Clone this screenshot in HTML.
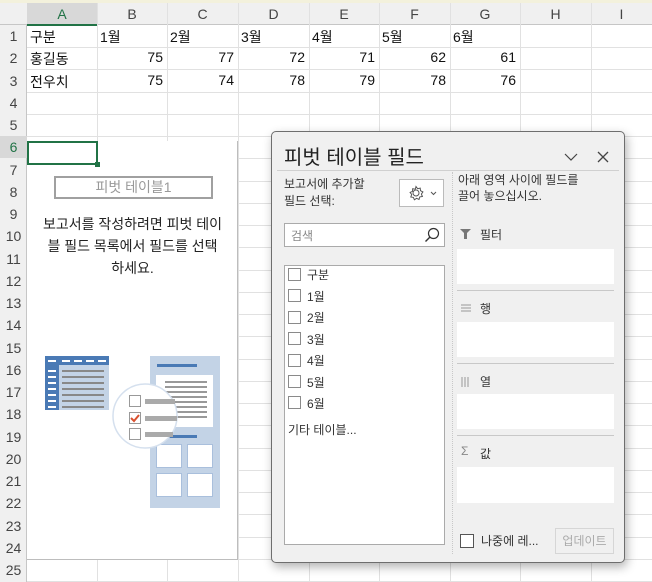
<!DOCTYPE html>
<html><head><meta charset="utf-8">
<style>
*{box-sizing:border-box;margin:0;padding:0}
body{width:652px;height:582px;overflow:hidden;background:#fff;position:relative;font-family:"Liberation Sans","Noto Sans CJK KR",sans-serif;font-size:14px;color:#222}
.a{position:absolute}
.vl{position:absolute;width:1px;background:#e1e1e1}
.hl{position:absolute;height:1px;background:#e1e1e1}
.ch{position:absolute;top:3px;height:22px;text-align:center;line-height:22px;color:#444;font-size:14px}
.rh{position:absolute;left:0;width:27px;text-align:center;color:#444;font-size:14px}
.c{position:absolute;font-size:14px;color:#111}
.r{text-align:right}
.pane{position:absolute;left:271px;top:131px;width:354px;height:432px;background:#f0f0f0;border:1px solid #6e6e6e;border-radius:5px;box-shadow:2px 4px 10px rgba(0,0,0,.3)}
.p{position:absolute;font-size:12px;color:#333}
.box{position:absolute;background:#fff}
.cb{position:absolute;width:13px;height:13px;border:1px solid #8a8a8a;background:#fff}
</style></head><body>
<div class="a" style="left:0;top:0;width:652px;height:3px;background:#f3f1dc"></div>
<div class="a" style="left:0;top:3px;width:652px;height:22px;background:#f0f0f0;border-bottom:1px solid #c6c6c6"></div>
<div class="a" style="left:0;top:25px;width:27px;height:557px;background:#f0f0f0;border-right:1px solid #c6c6c6"></div>
<div class="a" style="left:27px;top:3px;width:70px;height:23px;background:#d8d8d8;border-bottom:2px solid #217346"></div>
<div id="g"></div>
<!-- pivot placeholder -->
<div class="a" style="left:27px;top:141px;width:211px;height:419px;background:#fff;border-right:1px solid #bdbdbd;border-bottom:1px solid #bdbdbd"></div>
<div class="a" style="left:27px;top:141px;width:71px;height:24px;border:2px solid #217346"></div>
<div class="a" style="left:95px;top:162px;width:5px;height:5px;background:#217346"></div>
<div class="a" style="left:54px;top:176px;width:159px;height:23px;border:2px solid #a0a0a0;text-align:center;line-height:19px;color:#999;font-size:14px">피벗 테이블1</div>
<div class="a" style="left:29px;top:213px;width:207px;text-align:center;font-size:14px;line-height:22px;color:#222">보고서를 작성하려면 피벗 테이<br>블 필드 목록에서 필드를 선택<br>하세요.</div>
<svg class="a" style="left:30px;top:340px" width="200" height="180" viewBox="0 0 200 180">
<rect x="15" y="16" width="64" height="54" fill="#c3d3e6"/>
<rect x="15" y="16" width="64" height="9" fill="#4a7ab5"/>
<rect x="15" y="16" width="14" height="54" fill="#4a7ab5"/>
<g fill="#fff"><rect x="18" y="20" width="8" height="2"/><rect x="32" y="20" width="8" height="2"/><rect x="44" y="20" width="8" height="2"/><rect x="56" y="20" width="8" height="2"/><rect x="68" y="20" width="8" height="2"/>
<rect x="18" y="30" width="8" height="2"/><rect x="18" y="36" width="8" height="2"/><rect x="18" y="42" width="8" height="2"/><rect x="18" y="48" width="8" height="2"/><rect x="18" y="54" width="8" height="2"/><rect x="18" y="60" width="8" height="2"/><rect x="18" y="66" width="8" height="2"/></g>
<g fill="#888"><rect x="32" y="30" width="42" height="2"/><rect x="32" y="36" width="42" height="2"/><rect x="32" y="42" width="42" height="2"/><rect x="32" y="48" width="42" height="2"/><rect x="32" y="54" width="42" height="2"/><rect x="32" y="60" width="42" height="2"/><rect x="32" y="66" width="42" height="2"/></g>
<rect x="120" y="16" width="70" height="152" fill="#c3d3e6"/>
<rect x="127" y="24" width="40" height="3" fill="#4a7ab5"/>
<rect x="126" y="35" width="57" height="52" fill="#fff"/>
<g fill="#999"><rect x="135" y="41" width="42" height="2"/><rect x="135" y="46" width="42" height="2"/><rect x="135" y="51" width="42" height="2"/><rect x="135" y="56" width="42" height="2"/><rect x="135" y="61" width="42" height="2"/><rect x="135" y="66" width="42" height="2"/><rect x="135" y="71" width="42" height="2"/><rect x="135" y="76" width="42" height="2"/></g>
<rect x="127" y="95" width="40" height="3" fill="#4a7ab5"/>
<g fill="#fff" stroke="#a9bfdc"><rect x="126.5" y="104.5" width="25" height="23"/><rect x="157.5" y="104.5" width="25" height="23"/><rect x="126.5" y="133.5" width="25" height="23"/><rect x="157.5" y="133.5" width="25" height="23"/></g>
<circle cx="115" cy="76" r="32" fill="#fff" stroke="#d5e0ee" stroke-width="1.5"/>
<g fill="#fff" stroke="#999"><rect x="99.5" y="55.5" width="11" height="11"/><rect x="99.5" y="72.5" width="11" height="11"/><rect x="99.5" y="88.5" width="11" height="11"/></g>
<g fill="#aaa"><rect x="115" y="59" width="30" height="5"/><rect x="115" y="76" width="32" height="5"/><rect x="115" y="92" width="28" height="5"/></g>
<path d="M101 78 l3 3 l5 -6" stroke="#d9502f" stroke-width="2" fill="none"/>
</svg>
<!-- pane -->
<div class="pane">
<div class="a" style="left:5px;top:4px;width:342px;height:35px;border-bottom:1px solid #d0d0d0"></div>
<div class="a" style="left:12px;top:9px;font-size:20px;color:#222">피벗 테이블 필드</div>
<svg class="a" style="left:292px;top:20px" width="14" height="10"><path d="M1 2 l6 6 l6 -6" stroke="#444" fill="none" stroke-width="1.2"/></svg>
<svg class="a" style="left:325px;top:19px" width="12" height="12"><path d="M1 1 L11 11 M11 1 L1 11" stroke="#444" stroke-width="1.3"/></svg>
<div class="p" style="left:12px;top:44px;line-height:17px">보고서에 추가할<br>필드 선택:</div>
<div class="box" style="left:127px;top:47px;width:45px;height:28px;border:1px solid #bbb"></div>
<svg class="a" style="left:136px;top:53px" width="32" height="16"><circle cx="8" cy="8" r="3" fill="none" stroke="#555"/><path d="M8 1.5 l1.6 2.2 2.6 -.6 .3 2.6 2.4 1.2 -1.5 2.2 1 2.4 -2.6 .4 -.8 2.5 -2.4 -1.1 -2.2 1.5 -1 -2.4 -2.6 -.4 .9 -2.5 -1.6 -2.1 2.4 -1.1 .2 -2.6 2.6 .5z" fill="none" stroke="#555" stroke-width="1"/><path d="M23 7 l2.5 2.5 l2.5 -2.5" stroke="#555" fill="none"/></svg>
<div class="p" style="left:186px;top:40px;line-height:16px">아래 영역 사이에 필드를<br>끌어 놓으십시오.</div>
<div class="a" style="left:180px;top:40px;width:1px;height:382px;border-left:1px dotted #c8c8c8"></div>
<div class="box" style="left:12px;top:91px;width:161px;height:24px;border:1px solid #aaa"></div>
<div class="p" style="left:19px;top:95px;color:#888">검색</div>
<svg class="a" style="left:152px;top:95px" width="16" height="16"><circle cx="9.5" cy="6.5" r="5" fill="none" stroke="#333" stroke-width="1.2"/><path d="M6 10 L1.5 14.5" stroke="#333" stroke-width="1.4"/></svg>
<div class="box" style="left:12px;top:133px;width:161px;height:280px;border:1px solid #aaa"></div>
<div class="cb" style="left:16px;top:136px"></div><div class="p" style="left:35px;top:134px">구분</div>
<div class="cb" style="left:16px;top:157px"></div><div class="p" style="left:35px;top:156px">1월</div>
<div class="cb" style="left:16px;top:179px"></div><div class="p" style="left:35px;top:177px">2월</div>
<div class="cb" style="left:16px;top:200px"></div><div class="p" style="left:35px;top:199px">3월</div>
<div class="cb" style="left:16px;top:222px"></div><div class="p" style="left:35px;top:220px">4월</div>
<div class="cb" style="left:16px;top:243px"></div><div class="p" style="left:35px;top:242px">5월</div>
<div class="cb" style="left:16px;top:264px"></div><div class="p" style="left:35px;top:263px">6월</div>
<div class="p" style="left:16px;top:289px">기타 테이블...</div>
<svg class="a" style="left:188px;top:97px" width="12" height="10"><path d="M0 0 H11 L7 4 V10 H4 V4 Z" fill="#777"/></svg>
<div class="p" style="left:208px;top:94px">필터</div>
<div class="box" style="left:185px;top:117px;width:157px;height:35px"></div>
<div class="a" style="left:185px;top:158px;width:157px;height:1px;background:#c8c8c8"></div>
<svg class="a" style="left:189px;top:172px" width="11" height="8"><path d="M0 1h10M0 4h10M0 7h10" stroke="#999"/></svg>
<div class="p" style="left:208px;top:168px">행</div>
<div class="box" style="left:185px;top:190px;width:157px;height:35px"></div>
<div class="a" style="left:185px;top:231px;width:157px;height:1px;background:#c8c8c8"></div>
<svg class="a" style="left:189px;top:245px" width="10" height="10"><path d="M1 0v10M4 0v10M7 0v10" stroke="#999"/></svg>
<div class="p" style="left:208px;top:241px">열</div>
<div class="box" style="left:185px;top:262px;width:157px;height:35px"></div>
<div class="a" style="left:185px;top:303px;width:157px;height:1px;background:#c8c8c8"></div>
<div class="p" style="left:189px;top:312px;color:#888">Σ</div>
<div class="p" style="left:208px;top:313px">값</div>
<div class="box" style="left:185px;top:335px;width:157px;height:36px"></div>
<div class="cb" style="left:188px;top:402px;width:14px;height:14px;border-color:#555"></div>
<div class="p" style="left:209px;top:400px">나중에 레...</div>
<div class="a" style="left:283px;top:396px;width:59px;height:26px;border:1px solid #d6d6d6;color:#aaa;font-size:12px;text-align:center;line-height:24px">업데이트</div>
</div>
<script>
var g=document.getElementById('g'),h='';
var cols=[27,97,167,238,309,379,450,520,591,652],L='ABCDEFGHI';
for(var i=0;i<9;i++){h+='<div class="ch" style="left:'+cols[i]+'px;width:'+(cols[i+1]-cols[i])+'px;'+(i==0?'color:#217346':'')+'">'+L[i]+'</div>';
 h+='<div class="vl" style="left:'+cols[i+1]+'px;top:3px;height:579px;'+(i<8?'':'')+'"></div>';}
for(var r=1;r<=25;r++){var t=25+(r-1)*22.25;h+='<div class="rh" style="top:'+t+'px;height:22px;line-height:22px;'+(r==6?'background:#d8d8d8;color:#217346':'')+'">'+r+'</div>';
 h+='<div class="hl" style="left:27px;top:'+(t+22)+'px;width:625px"></div>';}
var d=[['구분','1월','2월','3월','4월','5월','6월'],['홍길동',75,77,72,71,62,61],['전우치',75,74,78,79,78,76]];
for(var r=0;r<3;r++)for(var c=0;c<7;c++){var v=d[r][c],t=25+r*22.25,num=typeof v=='number';
 h+='<div class="c'+(num?' r':'')+'" style="left:'+(cols[c]+3)+'px;width:'+(cols[c+1]-cols[c]-7)+'px;top:'+(t+2)+'px">'+v+'</div>';}
g.innerHTML=h;
</script>
</body></html>
